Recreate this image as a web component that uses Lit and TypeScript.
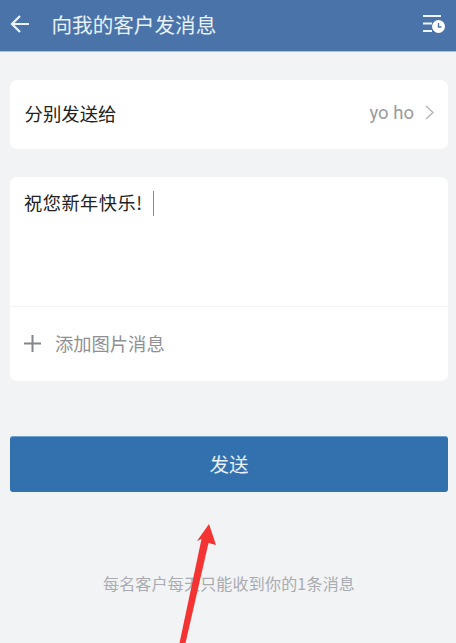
import { LitElement, html, css } from "lit";
import { customElement } from "lit/decorators.js";

@customElement("app-root")
export class AppRoot extends LitElement {
  static styles = css`
    :host {
      display: block;
      position: relative;
      width: 456px;
      height: 643px;
      overflow: hidden;
      background: #f1f3f5;
      font-family: "Noto Sans CJK SC", "Noto Sans", sans-serif;
    }
    .bar {
      height: 52px;
      box-sizing: border-box;
      background: #4a74a9;
      border-bottom: 1px solid #a9c4e2;
      display: flex;
      align-items: center;
      padding: 0 10px 3px 10px;
      color: #e8f1f7;
    }
    .back { width: 20px; height: 20px; display: block; }
    .title { margin-left: 21.500px; font-size: 20.600px; flex: 1; line-height: 24px; }
    .hist { width: 24px; height: 22px; display: block; }
    .main { padding: 28px 8px 0 10px; display: flex; flex-direction: column; }
    .card { background: #fff; border-radius: 7px; }
    .to {
      height: 69px;
      display: flex;
      align-items: center;
      padding: 0 14px 4px 14.500px;
      box-sizing: border-box;
      font-size: 18.400px;
      color: #222;
    }
    .to .label { flex: 1; }
    .to .who { font-family: "Roboto", sans-serif; font-size: 18.500px; color: #9a9a9e; margin-right: 11px; }
    .chev { width: 9px; height: 15px; display: block; }
    .msg { margin-top: 28px; height: 204px; display: flex; flex-direction: column; }
    .text {
      height: 130px;
      box-sizing: border-box;
      padding: 12px 14px 0 14px;
      font-size: 18.200px;
      line-height: 27px;
      color: #222;
      border-bottom: 1px solid #f3f3f4;
      display: flex;
      align-items: flex-start;
    }
    .text .t { letter-spacing: 0.500px; }
    .caret { width: 1px; height: 25px; background: #8a8a8a; margin: 2px 0 0 10px; }
    .add {
      flex: 1;
      display: flex;
      align-items: center;
      padding: 0 0 2px 14px;
      font-size: 18.300px;
      color: #8f9094;
      gap: 14px;
    }
    .plus { width: 17px; height: 17px; display: block; }
    .send {
      margin-top: 55px;
      height: 56px;
      box-sizing: border-box;
      background: #3270ae;
      border-radius: 3px;
      border-top: 1px solid #6fa0cf;
      display: flex;
      align-items: center;
      justify-content: center;
      color: #e6f0f6;
      font-size: 19.500px;
      padding: 0 0 3px 0;
    }
    .note {
      margin-top: 79px;
      text-align: center;
      font-size: 16px;
      line-height: 24px;
      color: #a9abb0;
      letter-spacing: 0.200px;
    }
    .arrow { position: absolute; left: 170px; top: 518px; width: 50px; height: 125px; }
  `;

  render() {
    return html`
      <div class="bar">
        <svg class="back" viewBox="0 0 20 20" fill="none" stroke="#eef4f8" stroke-width="2.2">
          <path d="M19 10H2M10 2l-8 8 8 8" />
        </svg>
        <div class="title">向我的客户发消息</div>
        <svg class="hist" viewBox="0 0 24 22" fill="none">
          <path d="M1 3h18M1 10.500h9M1 18h9" stroke="#eef4f8" stroke-width="2" />
          <circle cx="16.500" cy="13.500" r="6.500" fill="#fff" />
          <path d="M16.500 10v4h3" stroke="#4a74a9" stroke-width="1.400" />
        </svg>
      </div>
      <div class="main">
        <div class="card to">
          <span class="label">分别发送给</span>
          <span class="who">yo ho</span>
          <svg class="chev" viewBox="0 0 9 15" fill="none" stroke="#b5b5b8" stroke-width="1.400">
            <path d="M1 1l7 6.500-7 6.500" />
          </svg>
        </div>
        <div class="card msg">
          <div class="text"><span class="t">祝您新年快乐!</span><span class="caret"></span></div>
          <div class="add">
            <svg class="plus" viewBox="0 0 17 17" stroke="#85868a" stroke-width="2">
              <path d="M0 8.500h17M8.500 0v17" />
            </svg>
            <span>添加图片消息</span>
          </div>
        </div>
        <div class="send">发送</div>
        <div class="note">每名客户每天只能收到你的1条消息</div>
      </div>
      <svg class="arrow" viewBox="0 0 50 125">
        <path d="M39 6L46 27L38.500 25L15.500 125H9.500L31.500 21L27 23Z" fill="#f43333" />
      </svg>
    `;
  }
}
